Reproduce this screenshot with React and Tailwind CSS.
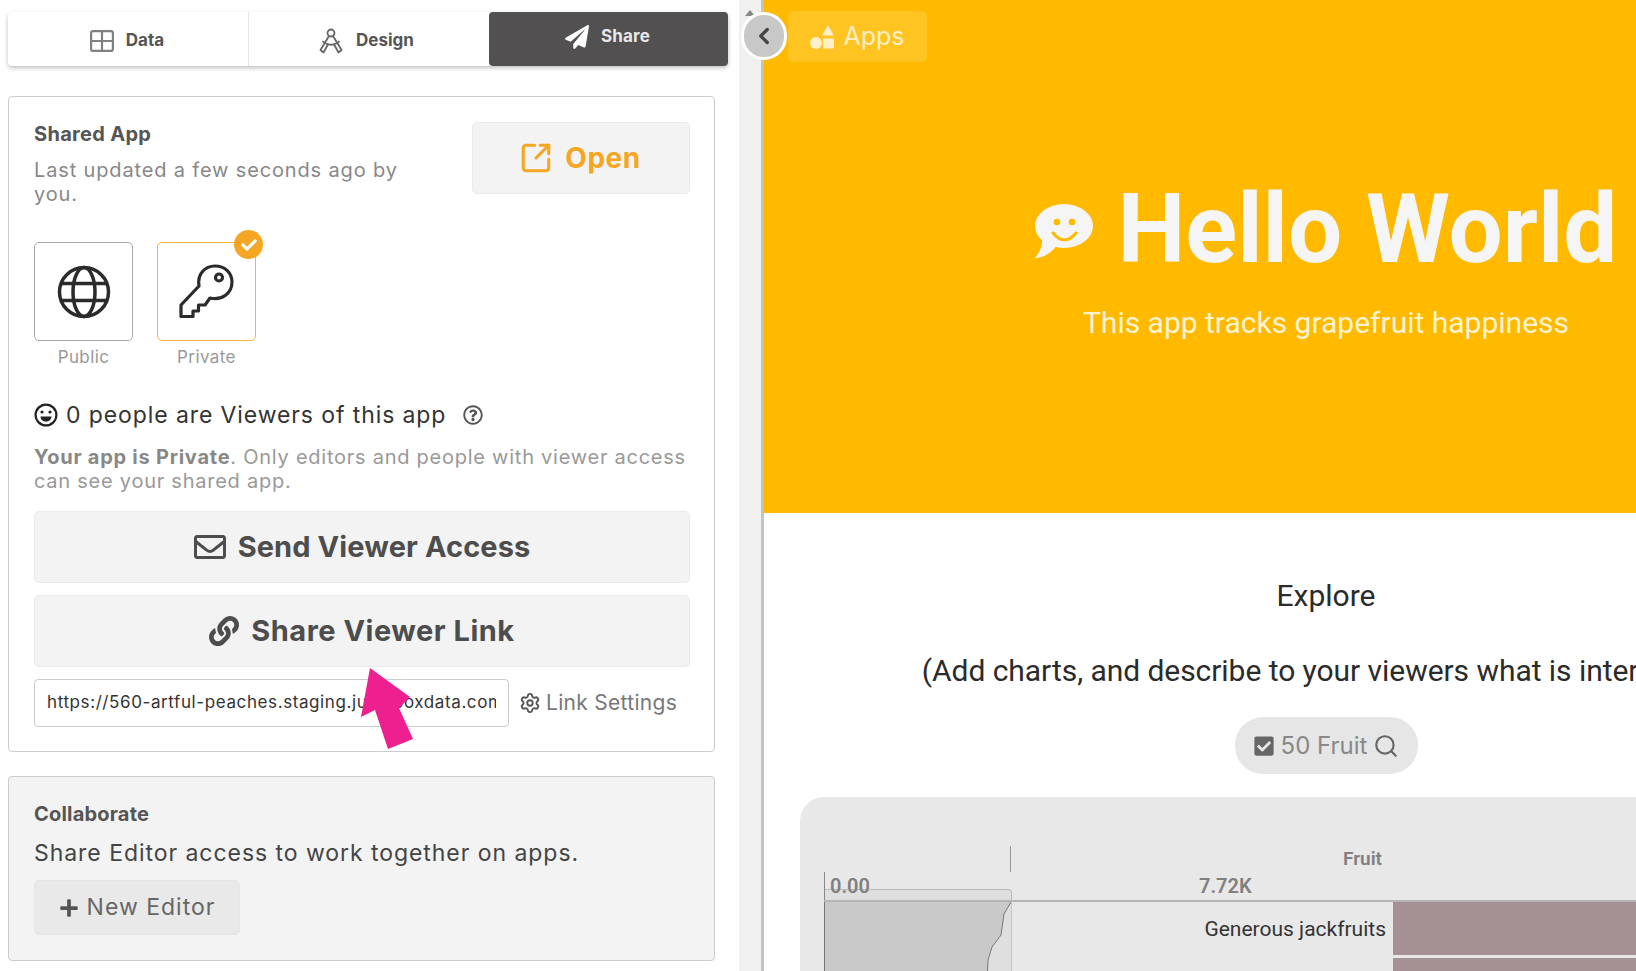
import React from 'react';
import { FaPaperPlane, FaRegEnvelope, FaLink, FaRegQuestionCircle, FaPlus, FaCheckSquare, FaCheck } from 'react-icons/fa';
import { ChevronLeft, Search, Settings, SquareArrowOutUpRight } from 'lucide-react';

const SANS = "font-['Inter','Noto_Sans',sans-serif]";

function GridIcon() {
  return (
    <svg width="24" height="22" viewBox="0 0 24 22" fill="none" stroke="#808080" strokeWidth="2.2">
      <rect x="1.100" y="1.100" width="21.800" height="19.800" rx="2" />
      <path d="M12 1v20M1 11h22" />
    </svg>
  );
}

function CompassIcon() {
  return (
    <svg width="26" height="26" viewBox="0 0 26 26" fill="none" stroke="#666" strokeWidth="1.800" strokeLinejoin="round">
      <circle cx="13" cy="5" r="3.500" />
      <path d="M11 8 L2.500 22 L5.500 24.500 L10.500 15.500 M15 8 L23.500 22 L20.500 24.500 L15.500 15.500" />
      <path d="M4.500 13 C9 18 17 18 21.500 13" />
    </svg>
  );
}

function GlobeIcon() {
  return (
    <svg width="54" height="54" viewBox="0 0 54 54" fill="none" stroke="#2b2b2b" strokeWidth="3.500">
      <circle cx="27" cy="27" r="24.500" />
      <ellipse cx="27" cy="27" rx="11" ry="24.500" />
      <path d="M4 18.500h46M4 35.500h46" />
    </svg>
  );
}

function KeyIcon() {
  return (
    <svg width="56" height="56" viewBox="0 0 56 56" fill="none" stroke="#2b2b2b" strokeWidth="3.200" strokeLinejoin="round">
      <path d="M2 52.500 V41 L20 22 C18 10 26 2 36 2 C46 2 53 9 53 18 C53 29 43 37 31 34 L26 41 H19.500 V47 H14 V52.500 Z" />
      <circle cx="40" cy="13.500" r="3.500" />
    </svg>
  );
}

function SmileIcon() {
  return (
    <svg width="24" height="24" viewBox="0 0 24 24" fill="none" stroke="#222" strokeWidth="2.200">
      <circle cx="12" cy="12" r="10.400" />
      <circle cx="8" cy="9" r="1.600" fill="#222" stroke="none" />
      <circle cx="16" cy="9" r="1.600" fill="#222" stroke="none" />
      <path d="M6.500 13.500h11c0 3-2.500 5-5.500 5s-5.500-2-5.500-5z" fill="#222" stroke="none" />
    </svg>
  );
}

function ShapesIcon() {
  return (
    <svg width="24" height="24" viewBox="0 0 24 24" fill="#fff0c8">
      <path d="M18 0 L24 10.500 H12 Z" />
      <circle cx="6" cy="18" r="6" />
      <rect x="13" y="13.500" width="11" height="10" rx="1" />
    </svg>
  );
}

function ChatSmileIcon() {
  return (
    <svg width="58" height="54" viewBox="0 0 58 54" className="mt-[3px]">
      <ellipse cx="29" cy="22" rx="29" ry="22" fill="#f5f5f5" />
      <path d="M7 32 C8 41 5 48 0 54 C8 54 17 49 22 41 Z" fill="#f5f5f5" />
      <circle cx="22" cy="18" r="3.300" fill="#ffba00" />
      <circle cx="37" cy="18" r="3.300" fill="#ffba00" />
      <path d="M18 29 Q29.500 43 41 29" fill="none" stroke="#ffba00" strokeWidth="3" strokeLinecap="round" />
    </svg>
  );
}

function Tabs() {
  return (
    <div className="flex h-[54px] w-[720px] rounded-[4px] bg-white shadow-[0_2px_4px_rgba(0,0,0,0.25)]">
      <div className="flex w-[241px] items-center justify-center gap-3 border-r border-[#e5e5e5] pr-[2px] pt-[3px] text-[17px] font-bold text-[#555]">
        <GridIcon />
        <span>Data</span>
      </div>
      <div className="flex w-[240px] items-center justify-center gap-3 pr-[6px] pt-[3px] text-[17px] font-bold text-[#555]">
        <CompassIcon />
        <span>Design</span>
      </div>
      <div className="flex w-[239px] items-center justify-center gap-3 rounded-[4px] bg-[#525051] pb-1 pr-[2px] text-[17px] font-bold tracking-[0.2px] text-[#e8e8e8]">
        <FaPaperPlane size={24} color="#fff" />
        <span>Share</span>
      </div>
    </div>
  );
}

function AccessOption({ label, selected, children }) {
  return (
    <div className="w-[99px]">
      <div className={`relative flex h-[99px] items-center justify-center rounded-[5px] border ${selected ? 'border-[#f5b335]' : 'border-[#aaa]'}`}>
        {children}
        {selected && (
          <div className="absolute -right-[8px] -top-[13px] flex h-[29px] w-[29px] items-center justify-center rounded-full bg-[#f5a623]">
            <FaCheck size={16} color="#fff" />
          </div>
        )}
      </div>
      <div className="mt-[5px] text-center text-[17px] leading-[22px] tracking-[0.4px] text-[#999]">{label}</div>
    </div>
  );
}

function SharedApp() {
  return (
    <section className="relative mt-[30px] h-[656px] w-[707px] rounded-[4px] border border-[#ccc] pl-[25px] pr-[24px] pt-[25px]">
      <div className="flex justify-between">
        <div className="w-[375px]">
          <h3 className="-mt-[1px] text-[20px] font-bold leading-[26px] tracking-[0.3px] text-[#555]">Shared App</h3>
          <p className="mt-[11px] text-[20px] leading-[24px] tracking-[0.85px] text-[#888]">Last updated a few seconds ago by you.</p>
        </div>
        <button className="flex h-[72px] w-[218px] items-center justify-center gap-3 rounded-[5px] border border-[#eaeaea] bg-[#f3f3f3] pr-[2px] text-[28px] font-bold tracking-[0.5px] text-[#f5a623]">
          <SquareArrowOutUpRight size={34} strokeWidth={2.2} />
          Open
        </button>
      </div>
      <div className="mt-[36px] flex gap-[24px]">
        <AccessOption label="Public"><GlobeIcon /></AccessOption>
        <AccessOption label="Private" selected><KeyIcon /></AccessOption>
      </div>
      <div className="mt-[30px] flex items-center gap-2 text-[23px] leading-[34px] tracking-[0.9px] text-[#333]">
        <SmileIcon />
        <span>0 people are Viewers of this app</span>
        <FaRegQuestionCircle size={20} color="#555" className="ml-[9px]" />
      </div>
      <p className="mt-[13px] text-[20px] leading-[24px] tracking-[0.75px] text-[#999]">
        <strong className="font-bold text-[#888]">Your app is Private</strong>. Only editors and people with viewer access can see your shared app.
      </p>
      <button className="mt-[18px] flex h-[72px] w-full items-center justify-center gap-3 rounded-[5px] border border-[#eaeaea] bg-[#f3f3f3] text-[29px] font-bold tracking-[0.1px] text-[#4d4d4d]">
        <FaRegEnvelope size={32} />
        Send Viewer Access
      </button>
      <button className="mt-[12px] flex h-[72px] w-full items-center justify-center gap-3 rounded-[5px] border border-[#eaeaea] bg-[#f3f3f3] text-[29px] font-bold tracking-[0.5px] text-[#4d4d4d]">
        <FaLink size={30} />
        Share Viewer Link
      </button>
      <div className="mt-[12px] flex items-center">
        <div className="flex h-[48px] w-[475px] items-center rounded-[4px] border border-[#ccc] px-[12px] text-[17px] tracking-[0.6px] text-[#333]">
          <div className="overflow-hidden whitespace-nowrap">https://560-artful-peaches.staging.juiceboxdata.com</div>
        </div>
        <Settings size={22} color="#555" className="ml-[10px]" />
        <span className="ml-[5px] text-[21px] tracking-[0.3px] text-[#777]">Link Settings</span>
      </div>
    </section>
  );
}

function Collaborate() {
  return (
    <section className="mt-[24px] h-[185px] w-[707px] rounded-[4px] border border-[#ccc] bg-[#f3f3f3] px-[25px] pt-[24px]">
      <h3 className="text-[20px] font-bold leading-[26px] tracking-[0.2px] text-[#555]">Collaborate</h3>
      <p className="mt-[11px] text-[23px] leading-[30px] tracking-[0.95px] text-[#444]">Share Editor access to work together on apps.</p>
      <button className="mt-[12px] flex h-[55px] w-[206px] items-center justify-center gap-2 rounded-[5px] border border-[#e5e5e5] bg-[#e9e9e9] text-[23px] tracking-[1px] text-[#666]">
        <FaPlus size={20} color="#555" />
        New Editor
      </button>
    </section>
  );
}

function FruitChart() {
  return (
    <div className="mx-[36px] mt-[23px] h-[400px] rounded-t-[24px] bg-[#e8e8e8] pl-[24px] pt-[49px] font-['Roboto',sans-serif]">
      <div className="flex h-[26px]">
        <div className="w-[187px] border-r border-[#999]" />
        <div className="ml-[332px] mt-[2px] text-[19px] font-semibold leading-[22px] text-[#808080]">Fruit</div>
      </div>
      <div className="flex h-[28px]">
        <div className="relative h-[28px] w-[188px] border-l border-[#888]">
          <div className="absolute inset-x-0 bottom-0 h-[11px] rounded-tr-[4px] border-r border-t border-[#bbb] bg-[#e0dfdf]" />
          <div className="absolute bottom-[3px] left-[5px] text-[20px] font-semibold leading-[22px] text-[#808080]">0.00</div>
        </div>
        <div className="ml-[187px] mt-[2px] text-[20px] font-semibold leading-[24px] text-[#808080]">7.72K</div>
      </div>
      <div className="flex border-t-2 border-[#b5b5b5]">
        <svg width="188" height="70" viewBox="0 0 188 70" className="shrink-0">
          <rect width="188" height="70" fill="#e0dfdf" />
          <path d="M0 0H187L180 12L177 33L168 45L164 58L163.500 70H0Z" fill="#c9c9c9" />
          <path d="M187 0L180 12L177 33L168 45L164 58L163.500 70" fill="none" stroke="#777" />
          <path d="M0.500 0V70" stroke="#777" />
          <path d="M187.500 0V70" stroke="#c4c4c4" />
        </svg>
        <div className="w-[381px] shrink-0 pr-[7px] pt-[13px] text-right text-[21px] leading-[28px] text-[#333]">Generous jackfruits</div>
        <div className="flex-1">
          <div className="h-[53px] bg-[#a59094]" />
          <div className="mt-[3px] h-[14px] bg-[#a59094]" />
        </div>
      </div>
    </div>
  );
}

function PreviewPane() {
  return (
    <main className="relative flex-1 overflow-hidden border-l-[3px] border-[#c4c4c4]">
      <div className="w-[1124px] text-center font-['Roboto',sans-serif]">
        <div className="h-[513px] bg-[#ffba00] pt-[179px]">
          <div className="flex items-center justify-center gap-[25px] text-[#f5f5f5]">
            <ChatSmileIcon />
            <h1 className="text-[96px] font-bold leading-[100px]">Hello World</h1>
          </div>
          <p className="mt-[24px] text-[30px] leading-[40px] text-[#fff3d1]">This app tracks grapefruit happiness</p>
        </div>
        <div className="bg-white">
          <h2 className="pt-[63px] text-[30px] leading-[40px] text-[#2b2b2b]">Explore</h2>
          <p className="mt-[35px] whitespace-nowrap text-[30px] leading-[40px] tracking-[-0.05px] text-[#2b2b2b]">(Add charts, and describe to your viewers what is interesting)</p>
          <div className="mt-[26px] flex justify-center">
            <div className={`flex h-[57px] w-[183px] items-center justify-center gap-[6px] rounded-[28px] bg-[#e6e6e6] text-[24px] text-[#888] ${SANS}`}>
              <FaCheckSquare size={22} color="#666" />
              <span>50 Fruit</span>
              <Search size={26} color="#666" />
            </div>
          </div>
          <FruitChart />
        </div>
      </div>
      <div className="absolute left-[24px] top-[11px] flex h-[51px] w-[139px] items-center justify-center gap-[9px] rounded-[5px] bg-[#ffc322] text-[25px] text-[#fff0c4]">
        <ShapesIcon />
        <span>Apps</span>
      </div>
    </main>
  );
}

export default function App() {
  return (
    <div className={`relative flex h-[971px] w-[1636px] overflow-hidden bg-white ${SANS}`}>
      <aside className="w-[739px] shrink-0 pl-[8px] pt-[12px]">
        <Tabs />
        <SharedApp />
        <Collaborate />
      </aside>
      <div className="w-[22px] shrink-0 bg-[#f0f0f0]" />
      <PreviewPane />
      <div className="absolute left-[745px] top-[10px] h-0 w-0 border-x-[5px] border-b-[6px] border-x-transparent border-b-[#888]" />
      <button className="absolute left-[741px] top-[12px] flex h-[48px] w-[46px] items-center justify-center rounded-full border-[3px] border-white bg-[#c8c8c8]">
        <ChevronLeft size={26} strokeWidth={3} color="#444" />
      </button>
      <svg width="60" height="90" viewBox="0 0 60 90" className="absolute left-[358px] top-[665px]">
        <path d="M12 3 L52 32 L41 43 L55 74 L30 84 L17 45 L3 52 Z" fill="#ee1f8f" />
      </svg>
    </div>
  );
}
